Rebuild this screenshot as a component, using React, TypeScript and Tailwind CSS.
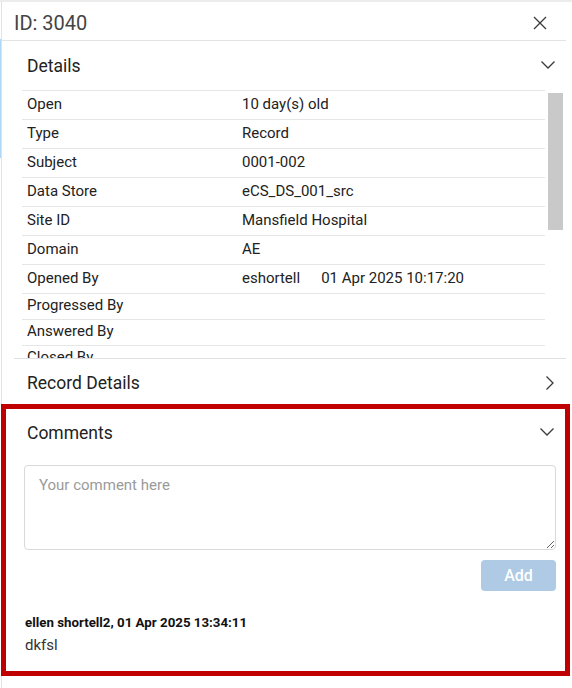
import React from "react";

const rows: { label: string; value?: React.ReactNode; h: string }[] = [
  { label: "Open", value: "10 day(s) old", h: "h-[29px]" },
  { label: "Type", value: "Record", h: "h-[29px]" },
  { label: "Subject", value: "0001-002", h: "h-[29px]" },
  { label: "Data Store", value: "eCS_DS_001_src", h: "h-[29px]" },
  { label: "Site ID", value: "Mansfield Hospital", h: "h-[29px]" },
  { label: "Domain", value: "AE", h: "h-[29px]" },
  {
    label: "Opened By",
    value: (
      <>
        <span>eshortell</span>
        <span className="ml-[21px]">01 Apr 2025 10:17:20</span>
      </>
    ),
    h: "h-[29px]",
  },
  { label: "Progressed By", h: "h-[26px]" },
  { label: "Answered By", h: "h-[26px]" },
  { label: "Closed By", h: "h-[26px]" },
];

function ChevronDown() {
  return (
    <svg width="16" height="10" viewBox="0 0 16 10" fill="none">
      <path d="M1.5 1.5 L8 8 L14.5 1.5" stroke="#3a3a3a" strokeWidth="1.3" />
    </svg>
  );
}

function ChevronRight() {
  return (
    <svg width="10" height="16" viewBox="0 0 10 16" fill="none">
      <path d="M1.5 1.5 L8 8 L1.5 14.5" stroke="#3a3a3a" strokeWidth="1.3" />
    </svg>
  );
}

function CloseX() {
  return (
    <svg width="14" height="14" viewBox="0 0 14 14" fill="none">
      <path d="M1 1 L13 13 M13 1 L1 13" stroke="#3a3a3a" strokeWidth="1.3" />
    </svg>
  );
}

export default function App() {
  return (
    <div
      className="w-[572px] h-[688px] bg-white overflow-hidden border-t-2 border-[#ececec] flex"
      style={{ fontFamily: "Roboto, 'Liberation Sans', sans-serif" }}
    >
      <div className="w-[1px] flex flex-col shrink-0">
        <div className="h-[37px]" />
        <div className="h-[119px] bg-[#aed8f5]" />
      </div>
      <div className="flex-1 border-l border-[#e2e2e2] flex flex-col min-w-0">
        {/* Header */}
        <div className="h-[39px] flex items-center justify-between pl-[12px] pr-[19px] pt-[3px] border-b border-[#e3e3e3] mr-[6px]">
          <span className="text-[20px] text-[#444] leading-none">ID: 3040</span>
          <CloseX />
        </div>
        {/* Details */}
        <div className="h-[49px] flex items-center justify-between pl-[25px] pr-[16px] pt-[2px]">
          <span className="text-[17.5px] text-[#222]">Details</span>
          <span className="mt-[-3px]">
            <ChevronDown />
          </span>
        </div>
        <div className="h-[268px] flex overflow-hidden">
          <div className="ml-[20px] w-[523px] border-t border-[#e6e6e6]">
            {rows.map((r) => (
              <div
                key={r.label}
                className={`${r.h} flex items-center pb-[2px] border-b border-[#e6e6e6] text-[15px] text-[#222]`}
              >
                <div className="w-[220px] pl-[5px] shrink-0">{r.label}</div>
                <div className="flex">{r.value}</div>
              </div>
            ))}
          </div>
          <div className="w-[20px] pl-[3px] pt-[3px]">
            <div className="w-[15px] h-[137px] bg-[#c9c9c9]" />
          </div>
        </div>
        {/* Record Details */}
        <div className="border-t border-[#e0e0e0] ml-[12px] mr-[6px]">
          <div className="h-[45px] flex items-center justify-between pl-[13px] pr-[11px] pt-[3px]">
            <span className="text-[17.5px] text-[#222]">Record Details</span>
            <ChevronRight />
          </div>
        </div>
        {/* Comments */}
        <div className="border-[5px] border-[#c00000] mr-[2px] ml-[-1px] flex flex-col">
          <div className="h-[47px] flex items-center justify-between pl-[21px] pr-[10px] pt-[1px]">
            <span className="text-[17.5px] text-[#222]">Comments</span>
            <span className="mt-[-2px]">
              <ChevronDown />
            </span>
          </div>
          <div className="pl-[18px] pr-[9px] pt-[9px] flex flex-col">
            <textarea
              placeholder="Your comment here"
              className="h-[85px] w-full border border-[#d9d9d9] rounded-[4px] px-[14px] py-[9px] text-[15px] leading-[20px] placeholder:text-[#9a9a9a] outline-none"
              style={{ fontFamily: "Roboto, 'Liberation Sans', sans-serif" }}
            />
            <div className="flex justify-end mt-[10px]">
              <button className="w-[75px] h-[31px] rounded-[4px] bg-[#aecae4] text-white text-[16px] font-medium">
                Add
              </button>
            </div>
          </div>
          <div className="pl-[19px] pt-[24px] pb-[16px]">
            <div className="text-[13.3px] font-bold text-[#111] leading-[16px]">
              ellen shortell2, 01 Apr 2025 13:34:11
            </div>
            <div className="text-[15px] text-[#333] leading-[20px] mt-[4px]">dkfsl</div>
          </div>
        </div>
        <div className="flex-1" />
      </div>
    </div>
  );
}
